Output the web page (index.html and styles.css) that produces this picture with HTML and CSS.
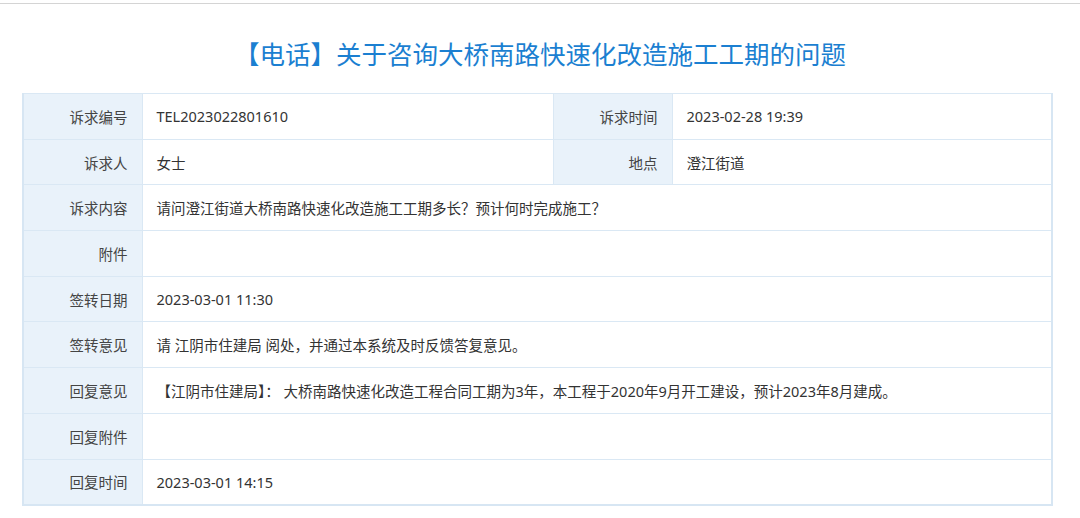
FILE: index.html
```html
<!DOCTYPE html>
<html lang="zh-CN">
<head>
    <meta charset="UTF-8">
    <meta name="viewport" content="width=device-width, initial-scale=1.0">
    <title>诉求详情</title>
    <link rel="stylesheet" href="styles.css">
</head>
<body>

<div class="page">
    <h2 class="title">【电话】关于咨询大桥南路快速化改造施工工期的问题</h2>
    <table class="detail">
        <colgroup>
            <col class="col-label">
            <col class="col-value">
            <col class="col-label2">
            <col>
        </colgroup>
        <tr>
            <th>诉求编号</th>
            <td>TEL2023022801610</td>
            <th>诉求时间</th>
            <td>2023-02-28 19:39</td>
        </tr>
        <tr>
            <th>诉求人</th>
            <td>女士</td>
            <th>地点</th>
            <td>澄江街道</td>
        </tr>
        <tr>
            <th>诉求内容</th>
            <td colspan="3">请问澄江街道大桥南路快速化改造施工工期多长？预计何时完成施工？</td>
        </tr>
        <tr>
            <th>附件</th>
            <td colspan="3"></td>
        </tr>
        <tr>
            <th>签转日期</th>
            <td colspan="3">2023-03-01 11:30</td>
        </tr>
        <tr>
            <th>签转意见</th>
            <td colspan="3">请 江阴市住建局 阅处，并通过本系统及时反馈答复意见。</td>
        </tr>
        <tr>
            <th>回复意见</th>
            <td colspan="3">【江阴市住建局】：&nbsp;大桥南路快速化改造工程合同工期为3年，本工程于2020年9月开工建设，预计2023年8月建成。</td>
        </tr>
        <tr>
            <th>回复附件</th>
            <td colspan="3"></td>
        </tr>
        <tr>
            <th>回复时间</th>
            <td colspan="3">2023-03-01 14:15</td>
        </tr>
    </table>
</div>

</body>
</html>
```

FILE: styles.css
```css
body {
    font-family: 'Noto Sans CJK SC', 'Noto Sans', sans-serif;
    background: #fff;
    color: #333;
    margin: 0;
}
.page {
    margin-top: 3px;
    border-top: 1px solid #d4d4d4;
    padding-top: 31px;
}
.title {
    margin: 0 0 22px;
    font-size: 25.5px;
    font-weight: normal;
    line-height: 36px;
    color: #1b7fd1;
    text-align: center;
}
.detail {
    margin-left: 22px;
    width: 1031px;
    border-collapse: collapse;
    border: 2px solid #d7e6f3;
    border-top: 1px solid #e6eff8;
    font-family: 'Noto Sans', 'Noto Sans CJK SC', sans-serif;
    font-size: 14.5px;
}
.col-label, .col-label2 {
    width: 119px;
}
.col-value {
    width: 411px;
}
.detail th, .detail td {
    height: 45.7px;
    padding: 0 14px;
    border: 1px solid #dae8f4;
    box-sizing: border-box;
}
.detail th {
    background: #e9f2fa;
    color: #444;
    font-weight: normal;
    text-align: right;
}
.detail td {
    text-align: left;
    color: #333;
}
```
